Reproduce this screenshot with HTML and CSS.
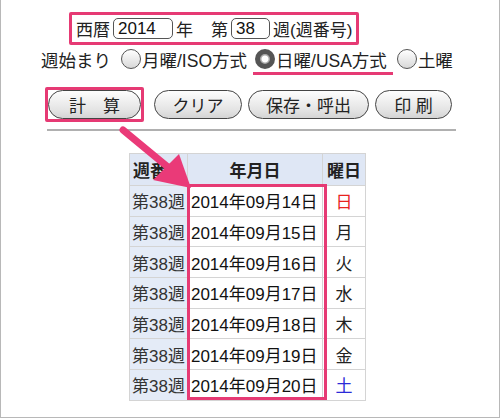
FILE: index.html
```html
<!DOCTYPE html>
<html lang="ja">
<head>
  <meta charset="UTF-8">
  <title>週番号計算</title>
  <link rel="stylesheet" href="styles.css">
</head>
<body>
  <div class="frame">
    <div class="year-row">
      <span>西暦</span>
      <span class="field field-year">2014</span>
      <span class="gap-after">年</span>
      <span>第</span>
      <span class="field field-week">38</span>
      <span>週(週番号)</span>
    </div>

    <div class="start-row">
      <span class="start-label">週始まり</span>
      <label class="radio"><span class="dot"></span>月曜/ISO方式</label>
      <label class="radio radio-on"><span class="dot"></span>日曜/USA方式</label>
      <label class="radio"><span class="dot"></span>土曜</label>
    </div>

    <div class="btn-row">
      <span class="btn-mark"><button type="button" class="btn btn-calc">計　算</button></span>
      <button type="button" class="btn btn-clear">クリア</button>
      <button type="button" class="btn btn-save">保存・呼出</button>
      <button type="button" class="btn btn-print">印 刷</button>
    </div>

    <hr class="rule">

    <table class="weeks">
      <tr><th>週番号</th><th class="col-date">年月日</th><th>曜日</th></tr>
      <tr><td class="wk">第38週</td><td class="date">2014年09月14日</td><td class="dow sun">日</td></tr>
      <tr><td class="wk">第38週</td><td class="date">2014年09月15日</td><td class="dow">月</td></tr>
      <tr><td class="wk">第38週</td><td class="date">2014年09月16日</td><td class="dow">火</td></tr>
      <tr><td class="wk">第38週</td><td class="date">2014年09月17日</td><td class="dow">水</td></tr>
      <tr><td class="wk">第38週</td><td class="date">2014年09月18日</td><td class="dow">木</td></tr>
      <tr><td class="wk">第38週</td><td class="date">2014年09月19日</td><td class="dow">金</td></tr>
      <tr><td class="wk">第38週</td><td class="date">2014年09月20日</td><td class="dow sat">土</td></tr>
    </table>

    <div class="date-mark"></div>

    <svg class="arrow" width="80" height="70" viewBox="0 0 80 70">
      <line x1="4" y1="4" x2="50" y2="42" stroke="#ea3a78" stroke-width="7" stroke-linecap="round"/>
      <polygon points="72,62 34,54 60,28" fill="#ea3a78"/>
    </svg>
  </div>
</body>
</html>
```

FILE: styles.css
```css
html, body {
  margin: 0;
  padding: 0;
  background: #fff;
}

body {
  font-family: "Liberation Sans", "Noto Sans CJK JP", sans-serif;
  font-size: 17px;
  color: #222;
}

.frame {
  position: relative;
  box-sizing: border-box;
  width: 500px;
  height: 418px;
  border: 1px solid #b8b8b8;
  border-top: none;
  padding-top: 12px;
}

/* year / week inputs */
.year-row {
  display: flex;
  align-items: center;
  width: fit-content;
  height: 27px;
  margin-left: 68px;
  padding: 0 4px 0 4px;
  border: 3px solid #e63a74;
  border-radius: 2px;
}

.field {
  display: inline-block;
  box-sizing: border-box;
  height: 21px;
  line-height: 19px;
  padding: 0 4px;
  margin: 0 3px;
  border: 1px solid #555;
  border-radius: 5px;
  font-size: 17px;
  color: #111;
}

.field-year { width: 60px; }
.field-week { width: 39px; }

.gap-after { margin-right: 18px; }

/* week start radios */
.start-row {
  display: flex;
  align-items: center;
  height: 28px;
  margin-top: 0;
  margin-left: 40px;
  font-size: 17.5px;
}

.start-label { margin-right: 10px; }

.radio {
  display: flex;
  align-items: center;
  margin-right: 8px;
  white-space: nowrap;
}

.dot {
  box-sizing: border-box;
  width: 20px;
  height: 20px;
  margin-right: 1px;
  border: 1px solid #555;
  border-radius: 50%;
  background: linear-gradient(#fff, #d8d8d8);
}

.radio-on {
  border-bottom: 3px solid #e63a74;
  margin-top: 3px;
  padding: 0 6px 0 2px;
  margin-left: -2px;
  margin-right: 4px;
}

.radio-on .dot {
  border: 5px solid #555;
  background: radial-gradient(circle, #fff 0 3px, #aaa 4px);
}

/* buttons */
.btn-row {
  display: flex;
  align-items: center;
  gap: 6px;
  margin-top: 14px;
  margin-left: 44px;
}

.btn-mark {
  display: inline-flex;
  border: 3px solid #e63a74;
  border-radius: 2px;
  margin-right: 4px;
}

.btn {
  height: 29px;
  padding: 0;
  border: 1px solid #444;
  border-radius: 15px;
  background: linear-gradient(#fdfdfd, #e4e4e4 70%, #d4d4d4);
  font-family: "Liberation Sans", "Noto Sans CJK JP", sans-serif;
  font-size: 17px;
  color: #222;
}

.btn-calc { width: 93px; }
.btn-clear { width: 88px; }
.btn-save { width: 121px; }
.btn-print { width: 77px; }

.rule {
  width: 409px;
  margin: 7px 0 0 46px;
  border: none;
  border-top: 2px solid #b0b0b0;
}

/* result table */
.weeks {
  margin: 22px 0 0 128px;
  border-collapse: collapse;
}

.weeks th, .weeks td {
  height: 29.7px;
  padding: 0 2px;
  border: 1px solid #d4d4d4;
  white-space: nowrap;
}

.weeks th {
  background: #dfe7f5;
  font-weight: bold;
  height: 31px;
}

.weeks .col-date { width: 130px; }

.weeks .wk {
  background: #e4ebf7;
  color: #333;
}

.weeks .date {
  padding: 0 3px;
  color: #111;
}

.weeks .dow {
  width: 38px;
  text-align: center;
}

.weeks .sun { color: #e8231f; }
.weeks .sat { color: #2b2bd8; }

.date-mark {
  position: absolute;
  left: 186px;
  top: 184px;
  width: 134px;
  height: 210px;
  border: 3px solid #e63a74;
}

.arrow {
  position: absolute;
  left: 118px;
  top: 126px;
}
```
